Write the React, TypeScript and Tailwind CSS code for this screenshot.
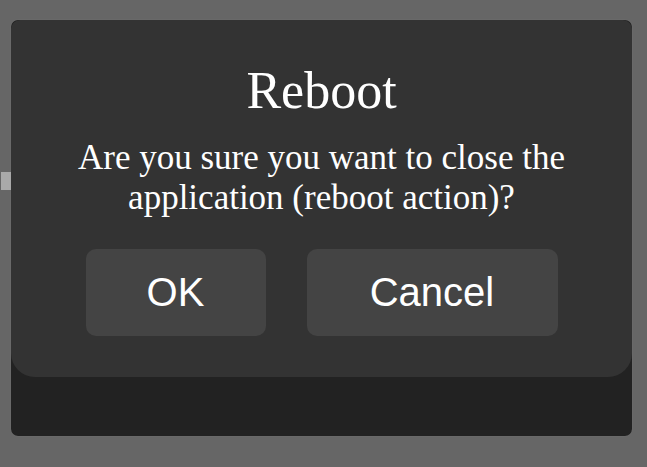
export default function App() {
  return (
    <div className="relative h-[467px] w-[647px] overflow-hidden bg-[#666666] pt-[20px] pl-[11px]">
      {/* peeking edge of something behind the dialog */}
      <div className="absolute left-[1px] top-[172px] h-[18px] w-[10px] bg-[#a9a9a9]" />

      <div className="flex h-[416px] w-[621px] flex-col rounded-[7px] bg-[#222222] shadow-[0_0_1px_#888]">
        <div className="flex flex-col items-center rounded-t-[9px] rounded-b-[24px] bg-[#333333] pb-[41px] pt-[40px] text-white">
          <h1 className="font-['Liberation_Serif',serif] text-[52px] leading-[1.2]">Reboot</h1>
          <p className="mt-[16px] w-[540px] text-center font-['Liberation_Serif',serif] text-[35px] leading-[40px]">
            Are you sure you want to close the application (reboot action)?
          </p>
          <div className="mt-[31px] flex gap-[41px] font-['Liberation_Sans',Arial,sans-serif] text-[40px] leading-[47px]">
            <button type="button" className="h-[87px] w-[180px] rounded-[10px] bg-[#444444] text-white">
              OK
            </button>
            <button type="button" className="h-[87px] w-[251px] rounded-[10px] bg-[#444444] text-white">
              Cancel
            </button>
          </div>
        </div>
      </div>
    </div>
  )
}
